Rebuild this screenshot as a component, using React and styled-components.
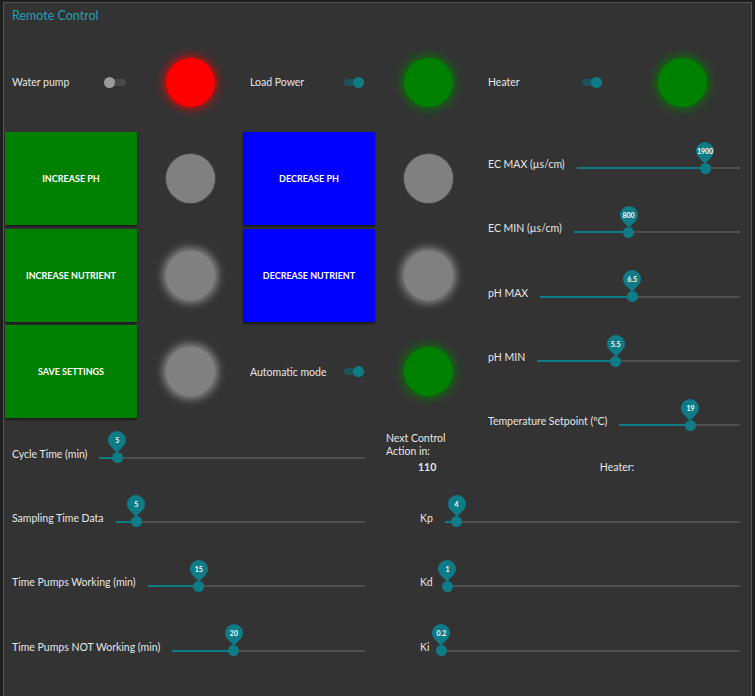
import React from 'react';
import styled, { createGlobalStyle } from 'styled-components';

const TEAL = '#0e7c86';

const GlobalStyle = createGlobalStyle`
  html, body {
    margin: 0;
    padding: 0;
    background: #1e1e1e;
    overflow: hidden;
  }
  body {
    font-family: Lato, "Open Sans", sans-serif;
    color: #e6e6e6;
  }
`;

const Group = styled.div`
  box-sizing: border-box;
  margin: 2px 0 0 3px;
  width: 749px;
  height: 720px;
  background: #333333;
  border: 1px solid #555;
  border-bottom: none;
`;

const Title = styled.div`
  box-sizing: border-box;
  height: 54px;
  padding: 5px 8px 0;
  font-size: 12.5px;
  line-height: 16px;
  color: #1ca2b3;
`;

const Layout = styled.div`
  display: grid;
  padding-left: 1px;
  grid-template-columns: 132px 106px 132px 106px 270px;
  grid-template-rows: 75px repeat(3, 96.5px) repeat(4, 64.3px);
  grid-template-areas:
    "wp wpled lp lpled heat"
    "b1 l1 b2 l2 right"
    "b3 l3 b4 l4 right"
    "b5 l5 auto autoled right"
    "left left left next right"
    "left left left pid pid"
    "left left left pid pid"
    "left left left pid pid";
`;

const Field = styled.div`
  grid-area: ${p => p.$area};
  box-sizing: border-box;
  height: ${p => p.$h}px;
  width: 132px;
  display: flex;
  align-items: center;
  justify-content: space-between;
  padding: 0 11px 0 7px;
  font-size: 10.5px;
`;

const HeatRow = styled.div`
  grid-area: heat;
  display: flex;
  height: 50px;
`;

const Switch = styled.div`
  position: relative;
  width: 22px;
  height: 11px;
  &::before {
    content: '';
    position: absolute;
    left: 2px;
    right: 0;
    top: 2px;
    height: 7px;
    border-radius: 4px;
    background: ${p => (p.$on ? '#1d5459' : '#484848')};
  }
  &::after {
    content: '';
    position: absolute;
    top: 0;
    ${p => (p.$on ? 'right: 0;' : 'left: 0;')}
    width: 11px;
    height: 11px;
    border-radius: 50%;
    background: ${p => (p.$on ? TEAL : '#9a9a9a')};
  }
`;

const LedCell = styled.div`
  grid-area: ${p => p.$area};
  height: ${p => p.$h}px;
  width: ${p => p.$w || 106}px;
  display: flex;
  align-items: center;
  justify-content: center;
`;

const LEDS = {
  red: { bg: '#ff0000', glow: '0 0 10px 2px rgba(255,0,0,0.75)' },
  green: { bg: '#008000', glow: '0 0 10px 3px rgba(0,128,0,0.7)' },
  grey: { bg: '#808080', glow: '0 0 0 1px rgba(255,255,255,0.1)' },
  greyGlow: { bg: '#808080', glow: '0 0 9px 3px rgba(255,255,255,0.45)' },
};

const Led = styled.div`
  width: 49px;
  height: 49px;
  border-radius: 50%;
  background: ${p => LEDS[p.$kind].bg};
  box-shadow: ${p => LEDS[p.$kind].glow};
`;

const ActionButton = styled.button`
  grid-area: ${p => p.$area};
  height: 93px;
  width: 132px;
  border: none;
  margin: 0;
  padding: 0;
  background: ${p => (p.$blue ? '#0000ff' : '#008000')};
  color: #fff;
  font-family: Lato, "Open Sans", sans-serif;
  font-size: 9px;
  font-weight: 700;
  box-shadow: 0 2px 2px rgba(0, 0, 0, 0.45);
  cursor: pointer;
`;

const Stack = styled.div`
  grid-area: ${p => p.$area};
  display: flex;
  flex-direction: column;
`;

const SliderRow = styled.div`
  box-sizing: border-box;
  height: 64.3px;
  flex: none;
  display: flex;
  align-items: center;
  padding: ${p => p.$pad};
  font-size: 10.5px;
`;

const SliderLabel = styled.span`
  white-space: nowrap;
`;

const Track = styled.div`
  position: relative;
  flex: 1;
  height: 2px;
  margin: 8px 0 0 12px;
  background: #4f4f4f;
`;

const Fill = styled.div`
  position: absolute;
  left: 0;
  top: 0;
  height: 2px;
  background: ${TEAL};
`;

const Thumb = styled.div`
  position: absolute;
  top: 1px;
  width: 11px;
  height: 11px;
  margin: -5.5px 0 0 -5.5px;
  border-radius: 50%;
  background: ${TEAL};
`;

const Pin = styled.div`
  position: absolute;
  left: -3.5px;
  top: -21px;
  width: 18px;
  height: 18px;
  display: flex;
  align-items: center;
  justify-content: center;
  font-size: 7px;
  font-weight: 700;
  color: #fff;
  &::before {
    content: '';
    position: absolute;
    inset: 0;
    background: ${TEAL};
    border-radius: 50% 50% 0 50%;
    transform: rotate(45deg);
  }
  span {
    position: relative;
  }
`;

const NextBox = styled.div`
  grid-area: next;
  padding: 10px 0 0 11px;
  font-size: 10.5px;
  line-height: 13px;
`;

const NextLabel = styled.div`
  width: 68px;
`;

const NextValue = styled.div`
  margin: 3px 0 0 32px;
  font-weight: 700;
`;

const HeaterText = styled.div`
  flex: 1;
  display: flex;
  justify-content: center;
  padding-left: 2px;
  padding-top: 8px;
  font-size: 10.5px;
`;

function Slider({ label, value, pct, pad }) {
  return (
    <SliderRow $pad={pad}>
      <SliderLabel>{label}</SliderLabel>
      <Track>
        <Fill style={{ width: `${pct}%` }} />
        <Thumb style={{ left: `${pct}%` }}>
          <Pin><span>{value}</span></Pin>
        </Thumb>
      </Track>
    </SliderRow>
  );
}

const rightSliders = [
  { label: 'EC MAX (µs/cm)', value: '1900', pct: 78.6 },
  { label: 'EC MIN (µs/cm)', value: '800', pct: 33 },
  { label: 'pH MAX', value: '6.5', pct: 46 },
  { label: 'pH MIN', value: '5.5', pct: 38.7 },
  { label: 'Temperature Setpoint (ºC)', value: '19', pct: 59 },
];

const leftSliders = [
  { label: 'Cycle Time (min)', value: '5', pct: 6.7 },
  { label: 'Sampling Time Data', value: '5', pct: 8.3 },
  { label: 'Time Pumps Working (min)', value: '15', pct: 23.6 },
  { label: 'Time Pumps NOT Working (min)', value: '20', pct: 32 },
];

const pidSliders = [
  { label: 'Kp', value: '4', pct: 4 },
  { label: 'Kd', value: '1', pct: 1 },
  { label: 'Ki', value: '0.2', pct: 0 },
];

export default function App() {
  return (
    <>
      <GlobalStyle />
      <Group>
        <Title>Remote Control</Title>
        <Layout>
          <Field $area="wp" $h={50}>Water pump<Switch /></Field>
          <LedCell $area="wpled" $h={50}><Led $kind="red" /></LedCell>
          <Field $area="lp" $h={50}>Load Power<Switch $on /></Field>
          <LedCell $area="lpled" $h={50}><Led $kind="green" /></LedCell>
          <HeatRow>
            <Field $h={50}>Heater<Switch $on /></Field>
            <LedCell $h={50} $w={138}><Led $kind="green" /></LedCell>
          </HeatRow>

          <ActionButton $area="b1">INCREASE PH</ActionButton>
          <LedCell $area="l1" $h={93}><Led $kind="grey" /></LedCell>
          <ActionButton $area="b2" $blue>DECREASE PH</ActionButton>
          <LedCell $area="l2" $h={93}><Led $kind="grey" /></LedCell>

          <ActionButton $area="b3">INCREASE NUTRIENT</ActionButton>
          <LedCell $area="l3" $h={93}><Led $kind="greyGlow" /></LedCell>
          <ActionButton $area="b4" $blue>DECREASE NUTRIENT</ActionButton>
          <LedCell $area="l4" $h={93}><Led $kind="greyGlow" /></LedCell>

          <ActionButton $area="b5">SAVE SETTINGS</ActionButton>
          <LedCell $area="l5" $h={93}><Led $kind="greyGlow" /></LedCell>
          <Field $area="auto" $h={93}>Automatic mode<Switch $on /></Field>
          <LedCell $area="autoled" $h={93}><Led $kind="green" /></LedCell>

          <Stack $area="right">
            {rightSliders.map(s => (
              <Slider key={s.label} {...s} pad="0 11px 0 7px" />
            ))}
            <HeaterText>Heater:</HeaterText>
          </Stack>

          <Stack $area="left">
            {leftSliders.map(s => (
              <Slider key={s.label} {...s} pad="0 10px 0 7px" />
            ))}
          </Stack>

          <NextBox>
            <NextLabel>Next Control Action in:</NextLabel>
            <NextValue>110</NextValue>
          </NextBox>

          <Stack $area="pid">
            {pidSliders.map(s => (
              <Slider key={s.label} {...s} pad="0 11px 0 45px" />
            ))}
          </Stack>
        </Layout>
      </Group>
    </>
  );
}
